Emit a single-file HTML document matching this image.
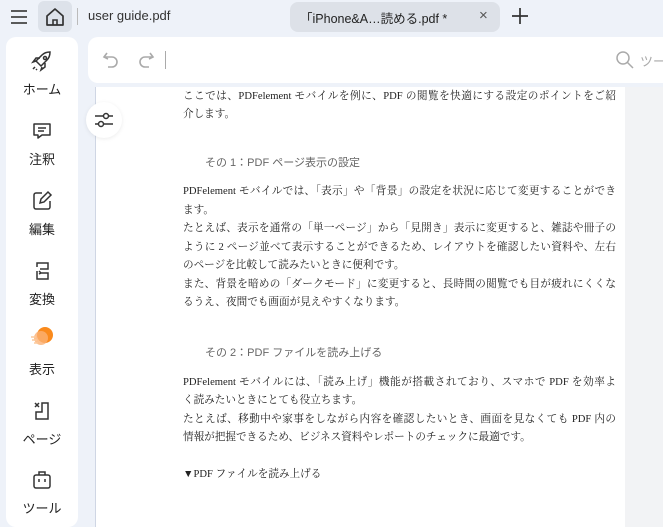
<!DOCTYPE html>
<html><head><meta charset="utf-8"><style>
*{margin:0;padding:0;box-sizing:border-box}
body{width:663px;height:518px;overflow:hidden;background:#eef2f9;position:relative;font-family:"Liberation Sans","Noto Sans CJK JP",sans-serif}
.abs{position:absolute;white-space:nowrap}
.side{left:6px;top:37px;width:72px;height:490px;background:#fff;border-radius:10px}
.item{position:absolute;left:6px;width:72px;text-align:center;font-size:13px;color:#222}
.item svg{display:block;margin:0 auto}
.tool{left:88px;top:37px;width:600px;height:46px;background:#fff;border-radius:10px}
.page{left:95px;top:87px;width:530px;height:440px;background:#fff;border-left:1px solid #cfd6e4}
.gray{left:625px;top:87px;width:38px;height:440px;background:#f2f3f5}
.t{position:absolute;left:183px;width:433px;font-family:"Liberation Serif","Noto Serif CJK JP",serif;font-size:10.6px;color:#222;white-space:nowrap;line-height:14px}
.j{text-align:justify;text-align-last:justify}
.h{font-family:"Liberation Sans","Noto Sans CJK JP",sans-serif;color:#666;left:205px;font-size:11px}
</style></head><body>
<svg class="abs" style="left:9px;top:7px" width="20" height="20" viewBox="0 0 20 20"><path d="M2 4h16M2 10h16M2 16h16" stroke="#444" stroke-width="1.8" fill="none"/></svg>
<div class="abs" style="left:38px;top:1px;width:34px;height:31px;background:#dde2ea;border-radius:6px"></div>
<svg class="abs" style="left:44px;top:6px" width="22" height="22" viewBox="0 0 22 22"><path d="M3 10L11 3l8 7v9H3z" stroke="#333" stroke-width="1.7" fill="none" stroke-linejoin="round"/><path d="M9 19v-5h4v5" stroke="#333" stroke-width="1.6" fill="none"/></svg>
<div class="abs" style="left:77px;top:8px;width:1px;height:17px;background:#bbb"></div>
<div class="abs" style="left:88px;top:8px;font-size:13px;color:#333">user guide.pdf</div>
<div class="abs" style="left:290px;top:2px;width:210px;height:30px;background:#dde1e8;border-radius:8px"></div>
<div class="abs" style="left:300px;top:8px;font-size:12.5px;color:#222">「iPhone&amp;A…読める.pdf *</div>
<div class="abs" style="left:479px;top:7px;font-size:15px;color:#555">×</div>
<svg class="abs" style="left:511px;top:7px" width="18" height="18" viewBox="0 0 18 18"><path d="M9 1v16M1 9h16" stroke="#333" stroke-width="1.7"/></svg>
<div class="abs side"></div>
<div class="item" style="top:49px"><svg width="24" height="24" viewBox="0 0 24 24" fill="none" stroke="#333" stroke-width="1.5"><path d="M9 15l-3-3 6-6c3-3 6-3 8-3 0 2 0 5-3 8l-6 6z"/><circle cx="15" cy="9" r="1.5"/><path d="M6 12l-3 1 3-4h4M12 18l-1 3 4-3v-4M5 18l-2 2M7 20l-1 1"/></svg><div style="margin-top:6px">ホーム</div></div>
<div class="item" style="top:119px"><svg width="24" height="24" viewBox="0 0 24 24" fill="none" stroke="#333" stroke-width="1.5"><path d="M4 5h16v11h-8l-4 3v-3H4z" stroke-linejoin="round"/><path d="M8 9h8M8 12h6"/></svg><div style="margin-top:6px">注釈</div></div>
<div class="item" style="top:189px"><svg width="24" height="24" viewBox="0 0 24 24" fill="none" stroke="#333" stroke-width="1.5"><path d="M12 4H6a2 2 0 0 0-2 2v12a2 2 0 0 0 2 2h12a2 2 0 0 0 2-2v-6"/><path d="M10 14l1-4 7-7 3 3-7 7z"/></svg><div style="margin-top:6px">編集</div></div>
<div class="item" style="top:259px"><svg width="24" height="24" viewBox="0 0 24 24" fill="none" stroke="#333" stroke-width="1.5"><path d="M7 8V4h11v6H10M7 12v8h11v-6h-7M9 15l2-1-2-2"/></svg><div style="margin-top:6px">変換</div></div>
<div class="item" style="top:325px"><svg width="28" height="26" viewBox="0 0 28 26"><circle cx="17" cy="10" r="8" fill="#fa8a1c"/><circle cx="13" cy="13" r="7" fill="#fbb073" opacity=".8"/><path d="M3 12h5M4 15h5M6 18h4" stroke="#fcc99b" stroke-width="1.5"/></svg><div style="margin-top:8px">表示</div></div>
<div class="item" style="top:399px"><svg width="24" height="24" viewBox="0 0 24 24" fill="none" stroke="#333" stroke-width="1.5"><path d="M12 4h6v16H6v-7h6zM12 13V4M5 4l4 4M5 8l4-4" /></svg><div style="margin-top:6px">ページ</div></div>
<div class="item" style="top:468px"><svg width="24" height="24" viewBox="0 0 24 24" fill="none" stroke="#333" stroke-width="1.5"><rect x="4" y="7" width="16" height="13" rx="2"/><path d="M9 7V4h6v3M9 11v3M15 11v3"/></svg><div style="margin-top:6px">ツール</div></div>
<div class="abs tool"></div>
<svg class="abs" style="left:101px;top:50px" width="20" height="20" viewBox="0 0 20 20" fill="none" stroke="#aaa" stroke-width="1.6"><path d="M6 3L3 7l4 2"/><path d="M3 7h8a5 5 0 0 1 0 10H7"/></svg>
<svg class="abs" style="left:136px;top:50px" width="20" height="20" viewBox="0 0 20 20" fill="none" stroke="#aaa" stroke-width="1.6"><path d="M14 3l3 4-4 2"/><path d="M17 7H9a5 5 0 0 0 0 10h4"/></svg>
<div class="abs" style="left:165px;top:51px;width:1px;height:18px;background:#aaa"></div>
<svg class="abs" style="left:615px;top:50px" width="20" height="20" viewBox="0 0 20 20" fill="none" stroke="#aaa" stroke-width="1.5"><circle cx="8" cy="8" r="6"/><path d="M12.5 12.5L18 18"/></svg>
<div class="abs" style="left:640px;top:51px;font-size:13px;color:#aaa">ツー</div>
<div class="abs page"></div>
<div class="abs gray"></div>
<div class="abs" style="left:86px;top:102px;width:36px;height:36px;background:#fff;border-radius:50%;box-shadow:0 1px 4px rgba(0,0,0,.08)"></div>
<svg class="abs" style="left:93px;top:110px" width="22" height="20" viewBox="0 0 22 20" fill="none" stroke="#333" stroke-width="1.5"><path d="M2 6h18M2 14h18"/><circle cx="13" cy="6" r="2.5" fill="#fff"/><circle cx="8" cy="14" r="2.5" fill="#fff"/></svg>
<div class="t j" style="top:90px">ここでは、PDFelement モバイルを例に、PDF の閲覧を快適にする設定のポイントをご紹</div>
<div class="t" style="top:108px">介します。</div>
<div class="t h" style="top:156px">その 1：PDF ページ表示の設定</div>
<div class="t j" style="top:185px">PDFelement モバイルでは、「表示」や「背景」の設定を状況に応じて変更することができ</div>
<div class="t" style="top:204px">ます。</div>
<div class="t j" style="top:222px">たとえば、表示を通常の「単一ページ」から「見開き」表示に変更すると、雑誌や冊子の</div>
<div class="t j" style="top:241px">ように 2 ページ並べて表示することができるため、レイアウトを確認したい資料や、左右</div>
<div class="t" style="top:259px">のページを比較して読みたいときに便利です。</div>
<div class="t j" style="top:278px">また、背景を暗めの「ダークモード」に変更すると、長時間の閲覧でも目が疲れにくくな</div>
<div class="t" style="top:296px">るうえ、夜間でも画面が見えやすくなります。</div>
<div class="t h" style="top:346px">その 2：PDF ファイルを読み上げる</div>
<div class="t j" style="top:376px">PDFelement モバイルには、「読み上げ」機能が搭載されており、スマホで PDF を効率よ</div>
<div class="t" style="top:394px">く読みたいときにとても役立ちます。</div>
<div class="t j" style="top:413px">たとえば、移動中や家事をしながら内容を確認したいとき、画面を見なくても PDF 内の</div>
<div class="t" style="top:431px">情報が把握できるため、ビジネス資料やレポートのチェックに最適です。</div>
<div class="t" style="top:468px">▼PDF ファイルを読み上げる</div>
</body></html>
